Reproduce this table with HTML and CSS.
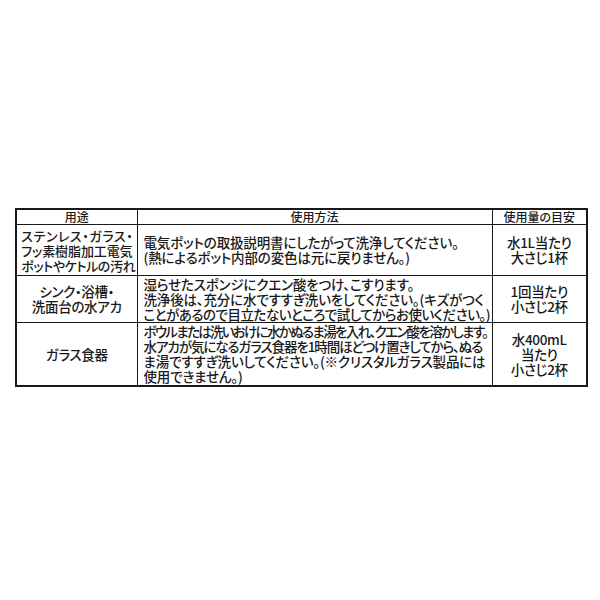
FILE: index.html
```html
<!DOCTYPE html>
<html lang="ja">
<head>
<meta charset="utf-8">
<link rel="stylesheet" href="styles.css">
</head>
<body>
<div class="page">
  <table class="usage">
    <colgroup>
      <col class="c1"><col class="c2"><col class="c3">
    </colgroup>
    <thead>
      <tr class="head">
        <th>用途</th>
        <th>使用方法</th>
        <th>使用量の目安</th>
      </tr>
    </thead>
    <tbody>
      <tr class="r1">
        <td class="use">
          <span class="jl">ステンレス・ガラス・</span>
          <span class="jl">フッ素樹脂加工電気</span>
          <span class="jl">ポットやケトルの汚れ</span>
        </td>
        <td class="how">
          <span class="ln">電気ポットの取扱説明書にしたがって洗浄してください。</span>
          <span class="ln">(熱によるポット内部の変色は元に戻りません。)</span>
        </td>
        <td class="amt">水1L当たり<br>大さじ1杯</td>
      </tr>
      <tr class="r2">
        <td class="use">シンク・浴槽・<br>洗面台の水アカ</td>
        <td class="how">
          <span class="ln">湿らせたスポンジにクエン酸をつけ、こすります。</span>
          <span class="ln fill w338">洗浄後は、充分に水ですすぎ洗いをしてください。(キズがつく</span>
          <span class="ln fill w335 tight0">ことがあるので目立たないところで試してからお使いください。)</span>
        </td>
        <td class="amt">1回当たり<br>小さじ2杯</td>
      </tr>
      <tr class="r3">
        <td class="use">ガラス食器</td>
        <td class="how">
          <span class="ln fill w343 tight2">ボウルまたは洗いおけに水かぬるま湯を入れ、クエン酸を溶かします。</span>
          <span class="ln fill w338 tight1">水アカが気になるガラス食器を1時間ほどつけ置きしてから、ぬる</span>
          <span class="ln fill w338">ま湯ですすぎ洗いしてください。(※クリスタルガラス製品には</span>
          <span class="ln">使用できません。)</span>
        </td>
        <td class="amt">水400mL<br>当たり<br>小さじ2杯</td>
      </tr>
    </tbody>
  </table>
</div>
</body>
</html>
```

FILE: styles.css
```css
html, body {
  margin: 0;
  padding: 0;
  background: #ffffff;
}

.page {
  padding: 208px 0 0 15px;
  font-family: "Noto Sans CJK JP", "Noto Sans", sans-serif;
  color: #1a1a1a;
}

.usage {
  border-collapse: collapse;
  width: 571px;
  table-layout: fixed;
  border: 2px solid #1a1a1a;
  font-feature-settings: "palt" 1;
}

.c1 { width: 121px; }
.c2 { width: 355px; }
.c3 { width: 95px; }

.usage th,
.usage td {
  border: 1.5px solid #1a1a1a;
  padding: 0;
  vertical-align: middle;
}

.usage th {
  font-size: 12px;
  font-weight: 500;
  line-height: 14px;
  height: 14px;
  text-align: center;
}

.usage td {
  font-size: 13.5px;
  font-weight: 500;
  line-height: 15px;
  letter-spacing: -0.15px;
  white-space: nowrap;
}

.usage td.use,
.usage td.amt {
  text-align: center;
}

.usage td.use {
  font-size: 13.5px;
  letter-spacing: -0.3px;
}

.usage td.amt {
  font-size: 13.5px;
  letter-spacing: -0.3px;
}

.jl {
  display: block;
  width: 111px;
  margin: 0 auto;
  text-align: justify;
  text-align-last: justify;
}

.r1 td.use {
  font-size: 13px;
  letter-spacing: -0.4px;
}

.usage td.how {
  padding-left: 6px;
}

.ln {
  display: block;
}

.fill {
  text-align: justify;
  text-align-last: justify;
}

.w335 { width: 335px; }
.w338 { width: 338px; }
.w343 { width: 343px; }

.tight0 { letter-spacing: -0.5px; }
.tight1 { letter-spacing: -1.8px; }
.tight2 { letter-spacing: -2.3px; }

.r1 td { height: 50px; }
.r2 td { height: 46px; }
.r3 td { height: 62px; }
```
